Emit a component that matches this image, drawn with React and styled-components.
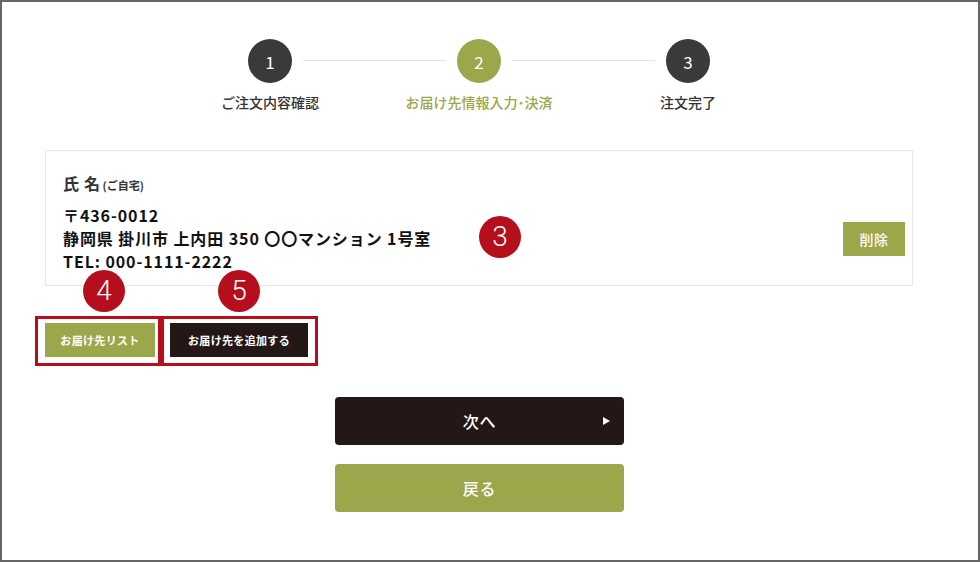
import styled, { createGlobalStyle } from 'styled-components';

const GREEN = '#9ca64a';
const DARK = '#231815';
const RED = '#b50e1c';

const GlobalStyle = createGlobalStyle`
  html, body {
    margin: 0;
    padding: 0;
    background: #fff;
  }
  body {
    font-family: "Noto Sans CJK JP", "Noto Sans", sans-serif;
    color: #231815;
  }
`;

const StFrame = styled.div`
  position: relative;
  width: 980px;
  height: 562px;
  box-sizing: border-box;
  border: 2px solid #666;
  background: #fff;
  overflow: hidden;
`;

const StStepper = styled.ol`
  display: flex;
  align-items: flex-start;
  list-style: none;
  margin: 0;
  padding: 37px 0 0 246px;
`;

const StStep = styled.li`
  display: flex;
  flex-direction: column;
  align-items: center;
  width: 44px;
`;

const StStepCircle = styled.div`
  display: flex;
  align-items: center;
  justify-content: center;
  width: 44px;
  height: 44px;
  border-radius: 50%;
  background: ${({ $active }) => ($active ? GREEN : '#3a3a3a')};
  color: #fff;
  font-size: 17px;
  font-weight: 400;
`;

const StStepLabel = styled.div`
  margin-top: 9px;
  white-space: nowrap;
  font-size: 14px;
  line-height: 20px;
  font-weight: 500;
  color: ${({ $active }) => ($active ? GREEN : '#333')};
`;

const StStepLine = styled.div`
  width: 143px;
  height: 1px;
  margin: 21px 11px 0;
  background: #e3e3e3;
`;

const StCard = styled.section`
  position: relative;
  width: 868px;
  margin: 38px 0 0 43px;
  box-sizing: border-box;
  border: 1px solid #e6e6e6;
  padding: 20px 7px 12px 17px;
`;

const StName = styled.div`
  font-size: 16px;
  line-height: 24px;
  font-weight: 700;
  color: #333;
  letter-spacing: 0.04em;

  small {
    font-size: 11px;
    margin-left: 2px;
    letter-spacing: 0;
  }
`;

const StAddressRow = styled.div`
  display: flex;
  align-items: center;
  justify-content: space-between;
  margin-top: 7px;
`;

const StAddress = styled.div`
  font-size: 16px;
  line-height: 23px;
  font-weight: 700;
  color: #111;
  letter-spacing: 0.9px;
`;

const StSmallButton = styled.button`
  display: flex;
  align-items: center;
  justify-content: center;
  width: ${({ $width }) => $width}px;
  height: 34px;
  padding: 0;
  border: 0;
  border-radius: 0;
  background: ${({ $dark }) => ($dark ? DARK : GREEN)};
  color: #fff;
  font-family: inherit;
  font-size: ${({ $fontSize }) => $fontSize || 11}px;
  font-weight: ${({ $fontSize }) => ($fontSize ? 500 : 700)};
  letter-spacing: 0.03em;
  cursor: pointer;
`;

const StActionRow = styled.div`
  position: relative;
  display: flex;
  gap: 15px;
  margin: 37px 0 0 43px;
`;

const StBadge = styled.div`
  position: absolute;
  left: ${({ $left }) => $left}px;
  top: ${({ $top }) => $top}px;
  display: flex;
  align-items: center;
  justify-content: center;
  width: 42px;
  height: 42px;
  border-radius: 50%;
  background: ${RED};
  color: #fff;
  font-family: Roboto, "Liberation Sans", sans-serif;
  font-size: 28px;
  font-weight: 300;
  line-height: 1;
  z-index: 2;
`;

const StHighlight = styled.div`
  position: absolute;
  left: ${({ $left }) => $left}px;
  top: -7px;
  width: ${({ $width }) => $width}px;
  height: 50px;
  box-sizing: border-box;
  border: 3px solid ${RED};
  pointer-events: none;
`;

const StMainButtons = styled.div`
  display: flex;
  flex-direction: column;
  gap: 19px;
  margin: 40px 0 0 333px;
  width: 289px;
`;

const StMainButton = styled.button`
  position: relative;
  display: flex;
  align-items: center;
  justify-content: center;
  height: 48px;
  padding: 0;
  border: 0;
  border-radius: 4px;
  background: ${({ $dark }) => ($dark ? DARK : GREEN)};
  color: #fff;
  font-family: inherit;
  font-size: 16px;
  font-weight: 500;
  letter-spacing: 0.05em;
  cursor: pointer;
`;

const StArrow = styled.span`
  position: absolute;
  right: 14px;
  top: 50%;
  width: 0;
  height: 0;
  margin-top: -4px;
  border-style: solid;
  border-width: 4px 0 4px 7px;
  border-color: transparent transparent transparent #fff;
`;

const steps = [
  { no: 1, label: 'ご注文内容確認' },
  { no: 2, label: 'お届け先情報入力･決済', active: true },
  { no: 3, label: '注文完了' },
];

function App() {
  return (
    <>
      <GlobalStyle />
      <StFrame>
        <StStepper>
          {steps.map((step, i) => [
            i > 0 && <StStepLine key={`line-${step.no}`} />,
            <StStep key={step.no}>
              <StStepCircle $active={step.active}>{step.no}</StStepCircle>
              <StStepLabel $active={step.active}>{step.label}</StStepLabel>
            </StStep>,
          ])}
        </StStepper>

        <StCard>
          <StName>
            氏 名<small>(ご自宅)</small>
          </StName>
          <StAddressRow>
            <StAddress>
              〒436-0012
              <br />
              静岡県 掛川市 上内田 350 〇〇マンション 1号室
              <br />
              TEL: 000-1111-2222
            </StAddress>
            <StSmallButton $width={62} $fontSize={14}>
              削除
            </StSmallButton>
          </StAddressRow>
          <StBadge $left={433} $top={65}>3</StBadge>
        </StCard>

        <StActionRow>
          <StHighlight $left={-10} $width={126} />
          <StHighlight $left={116} $width={157} />
          <StBadge $left={38} $top={-53}>4</StBadge>
          <StBadge $left={173} $top={-53}>5</StBadge>
          <StSmallButton $width={110}>お届け先リスト</StSmallButton>
          <StSmallButton $width={138} $dark>
            お届け先を追加する
          </StSmallButton>
        </StActionRow>

        <StMainButtons>
          <StMainButton $dark>
            次へ
            <StArrow />
          </StMainButton>
          <StMainButton>戻る</StMainButton>
        </StMainButtons>
      </StFrame>
    </>
  );
}

export default App;
